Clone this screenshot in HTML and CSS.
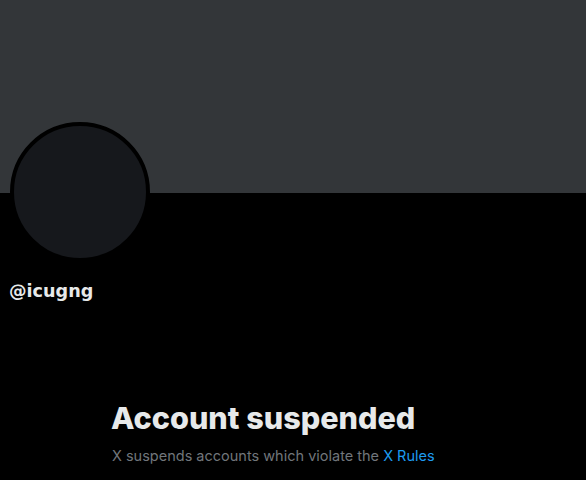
FILE: index.html
```html
<!DOCTYPE html>
<html>
<head>
<meta charset="utf-8">
<link rel="stylesheet" href="styles.css">
</head>
<body>
<div class="page">
  <div class="banner"></div>
  <div class="profile">
    <div class="avatar"></div>
    <div class="handle">@icugng</div>
  </div>
  <div class="notice">
    <h1 class="title">Account suspended</h1>
    <p class="desc">X suspends accounts which violate the <a class="link" href="#">X Rules</a></p>
  </div>
</div>
</body>
</html>
```
FILE: styles.css
```css
html, body {
  margin: 0;
  padding: 0;
  background: #000;
  height: 100%;
  overflow: hidden;
}
.page {
  width: 586px;
  height: 480px;
  background: #000;
  font-family: "Inter", "Liberation Sans", sans-serif;
}
.banner {
  height: 193px;
  background: #333639;
}
.profile {
  padding: 0 10px;
  display: flex;
  flex-direction: column;
  align-items: flex-start;
}
.avatar {
  width: 132px;
  height: 132px;
  margin-top: -71px;
  border-radius: 50%;
  background: #16181c;
  border: 4px solid #000;
}
.handle {
  margin-top: 18px;
  margin-left: -1px;
  font-family: "DejaVu Sans", sans-serif;
  font-weight: bold;
  font-size: 17.6px;
  line-height: 22px;
  color: #e7e9ea;
}
.notice {
  padding: 98px 0 0 111px;
}
.title {
  margin: 0;
  font-size: 30.6px;
  font-weight: 800;
  line-height: 36px;
  color: #e7e9ea;
}
.desc {
  margin: 10px 0 0 1px;
  font-size: 14.5px;
  line-height: 20px;
  color: #71767b;
}
.link {
  color: #1d9bf0;
  text-decoration: none;
}
```
